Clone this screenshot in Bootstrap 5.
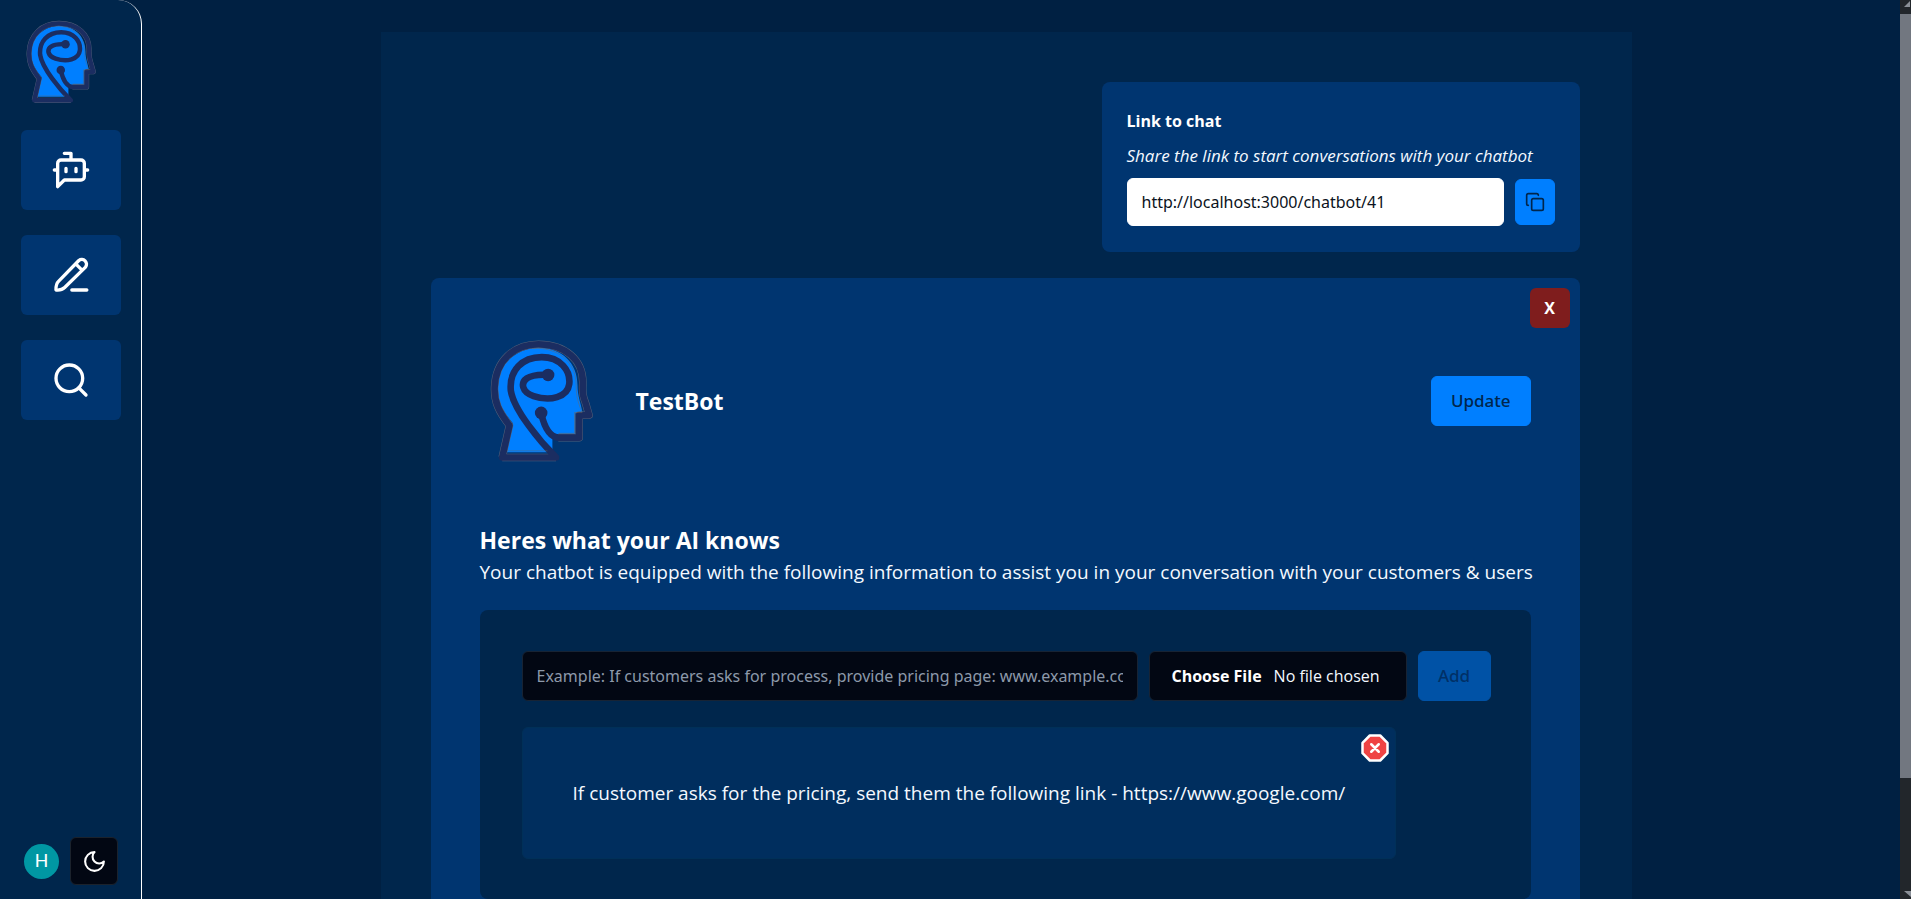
<!DOCTYPE html>
<html lang="en" data-bs-theme="dark">
<head>
<meta charset="utf-8">
<meta name="viewport" content="width=device-width, initial-scale=1">
<title>TestBot</title>
<link href="https://cdn.jsdelivr.net/npm/bootstrap@5.3.0/dist/css/bootstrap.min.css" rel="stylesheet">
<style>
  :root {
    --page: #002042;
    --panel: #00264c;
    --surface: #003570;
    --item: #002e5e;
    --primary: #007fff;
    --ink: #020713;
  }
  body { background: var(--page); color: #f4f9ff; font-family: "Open Sans", "Noto Sans", sans-serif; font-size: 16px; }
  .icon-line { fill: none; stroke: currentColor; stroke-width: 2; stroke-linecap: round; stroke-linejoin: round; }

  /* Sidebar */
  .side { width: 142px; background: var(--panel); border-right: 1px solid #fff; border-top-right-radius: 24px; padding: 20px 20px 14px 21px; }
  .side-logo { width: 70px; height: 84px; margin-left: 5px; margin-bottom: 26px; }
  .side-link { height: 80px; background: var(--surface); color: #fff; border-radius: 6px; }
  .side-nav { gap: 25px; }
  .side-foot { gap: 11px; padding-left: 3px; }
  .user-dot { width: 35px; height: 35px; background: #0097a3; color: #fff; font-family: Roboto, sans-serif; font-size: 19px; }
  .theme-btn { width: 48px; height: 48px; background: var(--ink); color: #fff; border: 1px solid #1b222c; border-radius: 6px; }

  /* Main column */
  .main-col { padding: 32px 30px 0 0; }
  .panel { width: 100%; max-width: 1251px; background: var(--panel); padding: 50px 52px 50px 50px; }
  .share-card { background: var(--surface); border-radius: 8px; padding: 26px 25px; width: 478px; }
  .share-note { font-size: 17px; line-height: 24px; margin: 10px 0; }
  .share-title { font-size: 16px; line-height: 26px; }
  .share-row { gap: 11px; }
  .field { border-radius: 6px; padding: 0 14px; font-family: "Noto Sans", sans-serif; font-size: 16px; }
  .field-light, .field-light:focus { height: 48px; background: #fff; color: #0b1220; border-color: #fff; }
  .field-dark, .field-dark:focus { height: 50px; background: var(--ink); color: #f4f9ff; border-color: #172334; }
  .field-dark::placeholder { color: #8d99aa; }
  .btn-brand { --bs-btn-color: #00264c; --bs-btn-bg: var(--primary); --bs-btn-border-color: var(--primary); --bs-btn-hover-bg: #3399ff;
    --bs-btn-disabled-color: #003066; --bs-btn-disabled-bg: #0052a6; --bs-btn-disabled-border-color: #0052a6; --bs-btn-disabled-opacity: 1;
    --bs-btn-border-radius: 6px; --bs-btn-font-size: 17px; --bs-btn-font-weight: 500; --bs-btn-font-family: "Noto Sans", sans-serif;
    --bs-btn-padding-x: 19px; height: 50px; }
  .btn-copy { --bs-btn-padding-x: 0; width: 40px; height: 46px; }

  .bot-card { background: var(--surface); border-radius: 8px; padding: 50px 49px; margin-top: 26px; }
  .btn-close-bot { top: 10px; right: 10px; width: 40px; height: 40px; background: #7f1d1d; color: #fff; border: 0; border-radius: 6px; font-weight: 700; }
  .bot-logo { width: 103px; height: 124px; margin: 0 43px 0 10px; }
  .bot-head { height: 145px; }
  .head-text { font-size: 23px; line-height: 34px; }
  .head-know { margin-top: 50px; }
  .lead-text { font-size: 19px; line-height: 30px; }
  .know { background: var(--panel); border-radius: 8px; padding: 41px 40px 40px 42px; margin-top: 23px; }
  .know-form { gap: 11px; }
  .file-wrap { width: 258px; }
  .field-file { height: 50px; border-radius: 6px; padding: 0 12px; line-height: 48px; background: var(--ink); color: #f4f9ff; border: 1px solid #172334; font-size: 16px; }
  .field-file::file-selector-button { height: 48px; margin: 0 12px 0 0; padding: 0 0 0 10px; border: 0; background: transparent !important; color: #fff; font-weight: 700; }
  .know-item { background: var(--item); border-radius: 6px; margin-top: 26px; padding: 50px; border: 1px solid #003058; }
  .btn-remove { top: 5px; right: 5px; width: 30px; height: 30px; }
  .btn-add { width: 73px; }

  /* Page scroller */
  .scroller { width: 11px; background: #22262b; }
  .scroller-thumb { background: #727780; height: 85%; }
</style>
</head>
<body class="vh-100 overflow-hidden">
<svg class="d-none" xmlns="http://www.w3.org/2000/svg">
  <symbol id="head-logo" viewBox="58 50 312 374">
    <path fill="#007fff" d="M108 392 128 305C95 265 80 240 80 195 82 120 145 76 205 76c70 0 118 46 118 114 0 32 12 60 15 82l-22 3v64h-50l-19 10v43z"/>
    <path fill="none" stroke="#536179" stroke-width="23" stroke-linejoin="round" d="M95 408 117 311C85 270 70 240 72 195 75 115 130 65 205 65c80 0 137 48 134 120-1 30 0 36 9 60l10 35h-30v68h-63M95 408h163"/>
    <path fill="none" stroke="#1b2d61" stroke-width="20" stroke-linejoin="round" stroke-linecap="round" d="M95 408 117 311C85 270 70 240 72 195 75 115 130 65 205 65c80 0 137 48 134 120-1 30 0 36 9 60l10 35h-30v68h-63c-28-2-43-35-52-73M95 408h163C210 360 130 265 121 205c-5-60 34-101 94-101 55 0 88 40 83 82-5 40-58 53-108 36-36-12-40-40-20-54 18-12 38-10 62-11"/>
    <circle cx="234" cy="158" r="19" fill="#1b2d61"/>
    <circle cx="213" cy="273" r="19" fill="#1b2d61"/>
    <path fill="none" stroke="#6c675f" stroke-width="1.5" d="M110 388h122M186 78c76-6 133 40 133 110 0 40 8 58 18 84h-23v63h-48"/>
  </symbol>
</svg>

<div class="d-flex h-100">
  <aside class="side d-flex flex-column flex-shrink-0">
    <a href="#" class="d-block" aria-label="Home"><svg class="side-logo d-block"><use href="#head-logo"/></svg></a>
    <nav class="side-nav d-flex flex-column">
      <a href="#" class="side-link d-flex align-items-center justify-content-center" aria-label="Create chatbot">
        <svg class="icon-line" width="40" height="40" viewBox="0 0 24 24"><path d="M12 6V2H8M8 18l-4 4V8a2 2 0 0 1 2-2h12a2 2 0 0 1 2 2v8a2 2 0 0 1-2 2ZM2 12h2M9 11v2M15 11v2M20 12h2"/></svg>
      </a>
      <a href="#" class="side-link d-flex align-items-center justify-content-center" aria-label="Edit chatbots">
        <svg class="icon-line" width="40" height="40" viewBox="0 0 24 24"><path d="M12.500 21H21.500M16.700 3.300a2.850 2.850 0 0 1 4 4L8.200 19.500C7 20.700 5 21.200 3 21c-.1-2 .3-4 1.500-5.200ZM15 5.500l3.300 3.300"/></svg>
      </a>
      <a href="#" class="side-link d-flex align-items-center justify-content-center" aria-label="Review sessions">
        <svg class="icon-line" width="40" height="40" viewBox="0 0 24 24"><circle cx="11" cy="11" r="8"/><path d="m21 21-4.300-4.300"/></svg>
      </a>
    </nav>
    <div class="side-foot d-flex align-items-center mt-auto">
      <button type="button" class="user-dot btn p-0 rounded-circle border-0 d-flex align-items-center justify-content-center">H</button>
      <button type="button" class="theme-btn p-0 d-flex align-items-center justify-content-center" aria-label="Toggle theme">
        <svg class="icon-line" width="25" height="25" viewBox="0 0 24 24"><path d="M12 3a6 6 0 0 0 9 9 9 9 0 1 1-9-9Z"/></svg>
      </button>
    </div>
  </aside>

  <main class="main-col flex-grow-1 d-flex justify-content-center align-items-start overflow-hidden">
    <div class="panel">
      <section class="share-card ms-auto">
        <h2 class="share-title fw-bold mb-0"><label for="chat-link">Link to chat</label></h2>
        <p class="share-note fst-italic text-nowrap">Share the link to start conversations with your chatbot</p>
        <div class="share-row d-flex align-items-center">
          <input id="chat-link" type="text" class="field field-light form-control" value="http://localhost:3000/chatbot/41" readonly>
          <button type="button" class="btn btn-brand btn-copy flex-shrink-0 d-flex align-items-center justify-content-center" aria-label="Copy link">
            <svg class="icon-line" width="20" height="20" viewBox="0 0 24 24"><rect x="8" y="8" width="14" height="14" rx="2"/><path d="M4 16c-1.100 0-2-.900-2-2V4c0-1.100.900-2 2-2h10c1.100 0 2 .900 2 2"/></svg>
          </button>
        </div>
      </section>

      <section class="bot-card position-relative">
        <button type="button" class="btn-close-bot position-absolute p-0" aria-label="Delete chatbot">X</button>
        <div class="bot-head d-flex align-items-center">
          <svg class="bot-logo flex-shrink-0"><use href="#head-logo"/></svg>
          <h1 class="head-text fw-bold mb-0">TestBot</h1>
          <button type="button" class="btn btn-brand ms-auto">Update</button>
        </div>
        <h2 class="head-text head-know fw-bold mb-0">Heres what your AI knows</h2>
        <p class="lead-text mb-0 text-nowrap">Your chatbot is equipped with the following information to assist you in your conversation with your customers &amp; users</p>

        <div class="know">
          <form class="know-form d-flex">
            <input type="text" class="field field-dark form-control" placeholder="Example: If customers asks for process, provide pricing page: www.example.com" aria-label="Information">
            <div class="file-wrap flex-shrink-0">
              <input type="file" class="field-file w-100" aria-label="Information file">
            </div>
            <button type="submit" class="btn btn-brand btn-add flex-shrink-0" disabled>Add</button>
          </form>
          <div class="d-flex">
            <div class="know-item lead-text position-relative">
              <button type="button" class="btn-remove btn border-0 p-0 position-absolute d-flex align-items-center justify-content-center" aria-label="Remove">
                <svg width="30" height="30" viewBox="0 0 24 24" fill="#ef4343" stroke="#fff" stroke-width="2" stroke-linejoin="round" stroke-linecap="round"><path d="M7.860 2h8.280L22 7.860v8.280L16.140 22H7.860L2 16.140V7.860ZM15 9l-6 6M9 9l6 6"/></svg>
              </button>
              If customer asks for the pricing, send them the following link - https://www.google.com/
            </div>
          </div>
        </div>
      </section>
    </div>
  </main>

  <div class="scroller flex-shrink-0 d-flex flex-column overflow-hidden" aria-hidden="true">
    <svg class="flex-shrink-0" width="11" height="14"><path fill="#8b9098" d="M4 7 10 1v6z"/></svg>
    <div class="scroller-thumb"></div>
    <svg class="mt-auto flex-shrink-0" width="11" height="10"><path fill="#8b9098" d="M4 2h7v6z"/></svg>
  </div>
</div>
<script src="https://cdn.jsdelivr.net/npm/bootstrap@5.3.0/dist/js/bootstrap.bundle.min.js"></script>
</body>
</html>
